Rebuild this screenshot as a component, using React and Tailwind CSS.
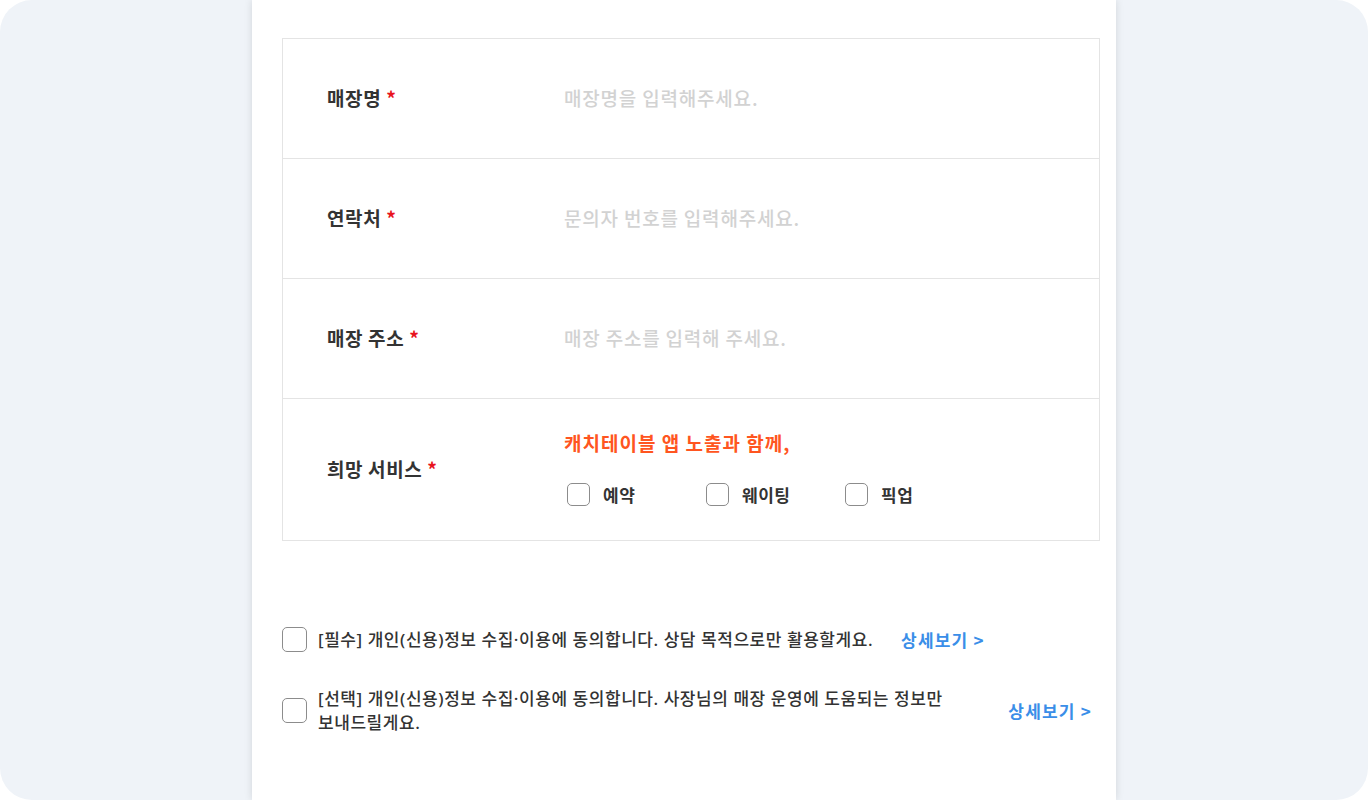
import React from 'react';

const FONT = { fontFamily: '"Noto Sans CJK KR", "Noto Sans", sans-serif' };

const Box = ({ size = 'w-[23px] h-[23px]' }) => (
  <span className={`${size} shrink-0 rounded-[5px] border border-[#8c8c8c] bg-white`} />
);

const Req = () => <span className="ml-[5px] text-[#e8141e]">*</span>;

const FieldRow = ({ label, placeholder }) => (
  <div className="flex h-[120px] items-center border-b border-[#e4e4e4]">
    <div className="w-[281px] pl-[44px] text-[19px] font-semibold tracking-[0.6px] text-[#333]">
      {label}
      <Req />
    </div>
    <div className="text-[19px] font-medium tracking-[0.8px] text-[#d2d2d2]">{placeholder}</div>
  </div>
);

const services = ['예약', '웨이팅', '픽업'];

// latin glyphs (dot, brackets) from Noto Sans so the middle dot stays narrow
const agreeText =
  "ml-[11px] break-keep font-['Noto_Sans','Noto_Sans_CJK_KR',sans-serif] text-[17px] font-medium leading-[24px] tracking-[0.55px] text-[#333]";

const App = () => {
  return (
    <div className="min-h-screen bg-white" style={FONT}>
      <div className="flex h-[800px] justify-center overflow-hidden rounded-[32px] bg-[#eff3f8]">
        <div className="w-[864px] bg-white pl-[30px] pr-[16px] pt-[38px] shadow-[0_0_8px_rgba(0,0,0,0.12)]">
          <div className="border border-b-0 border-[#e4e4e4]">
            <FieldRow label="매장명" placeholder="매장명을 입력해주세요." />
            <FieldRow label="연락처" placeholder="문의자 번호를 입력해주세요." />
            <FieldRow label="매장 주소" placeholder="매장 주소를 입력해 주세요." />
            <div className="flex h-[142px] items-center border-b border-[#e4e4e4]">
              <div className="w-[281px] pl-[44px] text-[19px] font-semibold tracking-[0.6px] text-[#333]">
                희망 서비스
                <Req />
              </div>
              <div className="flex flex-col pb-[4px]">
                <div className="text-[19px] font-semibold leading-[28px] tracking-[1px] text-[#ff5520]">
                  캐치테이블 앱 노출과 함께,
                </div>
                <div className="mt-[26px] flex pl-[3px]">
                  {services.map((s) => (
                    <label key={s} className="flex w-[139px] items-center gap-[13px]">
                      <Box />
                      <span className="text-[17px] font-semibold leading-[24px] tracking-[0.5px] text-[#333]">{s}</span>
                    </label>
                  ))}
                </div>
              </div>
            </div>
          </div>

          <div className="mt-[86px] flex flex-col gap-[34px] pr-[8px]">
            <div className="flex items-center">
              <Box size="w-[25px] h-[25px]" />
              <span className={agreeText}>
                [필수] 개인(신용)정보 수집·이용에 동의합니다. 상담 목적으로만 활용할게요.
              </span>
              <span className="ml-[28px] shrink-0 text-[17px] font-bold tracking-[1.2px] text-[#3a8ee8]">상세보기 &gt;</span>
            </div>
            <div className="flex items-center">
              <Box size="w-[25px] h-[25px]" />
              <span className={agreeText}>
                [선택] 개인(신용)정보 수집·이용에 동의합니다. 사장님의 매장 운영에 도움되는 정보만 보내드릴게요.
              </span>
              <span className="ml-[28px] shrink-0 text-[17px] font-bold tracking-[1.2px] text-[#3a8ee8]">상세보기 &gt;</span>
            </div>
          </div>
        </div>
      </div>
    </div>
  );
};

export default App;
